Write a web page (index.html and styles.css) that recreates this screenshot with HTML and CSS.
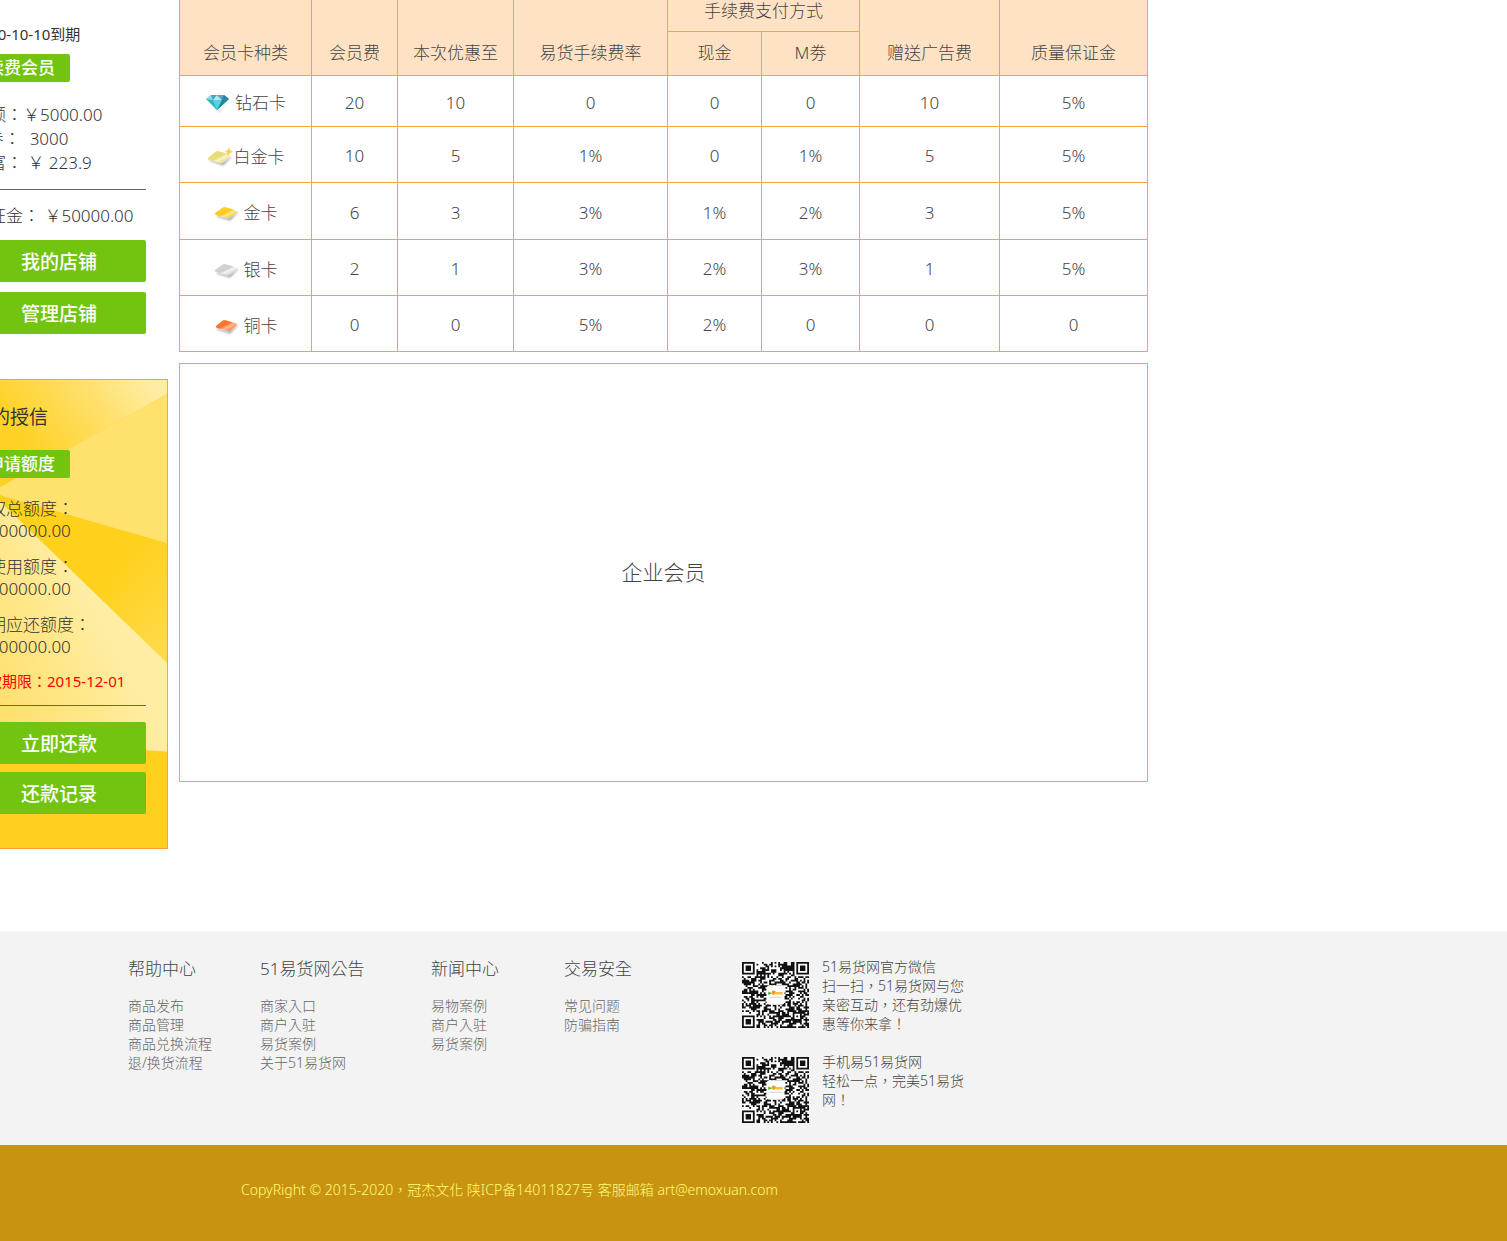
FILE: index.html
```html
<!DOCTYPE html>
<html lang="zh-TW">
<head>
<meta charset="utf-8">
<title>51易货网</title>
<link rel="stylesheet" href="styles.css">
</head>
<body>
<svg class="defs" aria-hidden="true">
  <defs>
    <linearGradient id="gold" x1="0" y1="0" x2="1" y2="1"><stop offset="0" stop-color="#ffdc2e"/><stop offset=".5" stop-color="#fbc91c"/><stop offset=".62" stop-color="#ffe98a"/><stop offset="1" stop-color="#f0b400"/></linearGradient>
    <linearGradient id="platinum" x1="0" y1="0" x2="1" y2="1"><stop offset="0" stop-color="#e6dc78"/><stop offset=".5" stop-color="#e8dd7c"/><stop offset=".62" stop-color="#f9f5c8"/><stop offset="1" stop-color="#d8c95c"/></linearGradient>
    <linearGradient id="silver" x1="0" y1="0" x2="1" y2="1"><stop offset="0" stop-color="#d4d4d4"/><stop offset=".5" stop-color="#cfcfcf"/><stop offset=".62" stop-color="#f4f4f4"/><stop offset="1" stop-color="#b9b9b9"/></linearGradient>
    <linearGradient id="copper" x1="0" y1="0" x2="1" y2="1"><stop offset="0" stop-color="#ff7a2c"/><stop offset=".45" stop-color="#fb7430"/><stop offset=".6" stop-color="#ffb98c"/><stop offset="1" stop-color="#f0641c"/></linearGradient>
    <filter id="soft" x="-20%" y="-40%" width="140%" height="200%"><feGaussianBlur stdDeviation=".8"/></filter>
  </defs>
</svg>

<div class="page">
  <div class="layout">
    <aside class="sidebar">
      <section class="account">
        <p class="note">2020-10-10到期</p>
        <button class="btn btn-small" type="button">续费会员</button>
        <div class="lines">
          <p>余额：￥5000.00</p>
          <p>M劵：&nbsp; 3000</p>
          <p>财富：&nbsp;￥ 223.9</p>
        </div>
        <hr>
        <p class="deposit">保证金：&nbsp;￥50000.00</p>
        <div class="actions">
          <button class="btn" type="button">我的店铺</button>
          <button class="btn" type="button">管理店铺</button>
        </div>
      </section>

      <section class="credit">
        <svg class="rays" viewBox="0 0 218 470" preserveAspectRatio="none" aria-hidden="true">
          <defs>
            <linearGradient id="r1" gradientUnits="userSpaceOnUse" x1="90" y1="85" x2="200" y2="0"><stop offset="0" stop-color="#ffd125"/><stop offset=".6" stop-color="#ffe06c"/><stop offset="1" stop-color="#ffeda6"/></linearGradient>
            <linearGradient id="r2" gradientUnits="userSpaceOnUse" x1="60" y1="120" x2="218" y2="260"><stop offset="0" stop-color="#ffd01c"/><stop offset=".6" stop-color="#ffd01c"/><stop offset="1" stop-color="#ffda48"/></linearGradient>
            <linearGradient id="r3" gradientUnits="userSpaceOnUse" x1="30" y1="330" x2="160" y2="260"><stop offset="0" stop-color="#ffde68"/><stop offset=".7" stop-color="#ffe88e"/><stop offset="1" stop-color="#ffeda4"/></linearGradient>
          </defs>
          <rect width="218" height="470" fill="#ffd01e"/>
          <path d="M0 0H218V14L40 113L0 100Z" fill="url(#r1)"/>
          <path d="M40 113L218 14V164Z" fill="#ffe26e"/>
          <path d="M40 113L218 164V284Z" fill="url(#r2)"/>
          <path d="M40 113L218 284V373L0 360V113Z" fill="url(#r3)"/>
        </svg>
        <h2>我的授信</h2>
        <button class="btn btn-small" type="button">申请额度</button>
        <dl>
          <div><dt>授权总额度：</dt><dd>￥100000.00</dd></div>
          <div><dt>已使用额度：</dt><dd>￥100000.00</dd></div>
          <div><dt>本期应还额度：</dt><dd>￥100000.00</dd></div>
        </dl>
        <p class="note due">还款期限：2015-12-01</p>
        <hr>
        <div class="actions">
          <button class="btn" type="button">立即还款</button>
          <button class="btn" type="button">还款记录</button>
        </div>
      </section>
    </aside>

    <main class="main">
      <table class="fees">
        <colgroup><col class="c-name"><col class="c-fee"><col class="c-offer"><col class="c-rate"><col class="c-cash"><col class="c-m"><col class="c-ad"><col></colgroup>
        <thead>
          <tr>
            <th rowspan="2">会员卡种类</th><th rowspan="2">会员费</th><th rowspan="2">本次优惠至</th><th rowspan="2">易货手续费率</th>
            <th class="group" colspan="2">手续费支付方式</th>
            <th rowspan="2">赠送广告费</th><th rowspan="2">质量保证金</th>
          </tr>
          <tr><th>现金</th><th>M劵</th></tr>
        </thead>
        <tbody>
          <tr class="first">
            <th><span class="card-name"><svg width="25" height="20" viewBox="0 0 25 20"><path d="M2 6L14 18L24 7L14 19Z" fill="#555" opacity=".6" filter="url(#soft)"/><path d="M1 6L6 2H19L24 6L12 17Z" fill="#35b3c6"/><path d="M1 6L6 2L8 7Z" fill="#8fdbe4"/><path d="M6 2H12L8 7Z" fill="#4aa5bb"/><path d="M12 2L17 7H8Z" fill="#b5e6ee"/><path d="M12 2H19L17 7Z" fill="#5aa3bd"/><path d="M19 2L24 6L17 7Z" fill="#2c7f96"/><path d="M8 7H17L12 17Z" fill="#4fd6dc"/><path d="M17 7L24 6L12 17Z" fill="#1f8a96"/></svg>钻石卡</span></th>
            <td>20</td><td>10</td><td>0</td><td>0</td><td>0</td><td>10</td><td>5%</td>
          </tr>
          <tr>
            <th><span class="card-name tight"><svg width="27" height="20" viewBox="0 0 27 20"><path d="M3 13L15 17L24 10L16 18Z" stroke="#555" stroke-width="1" opacity=".6" filter="url(#soft)"/><path d="M1 11L8 5Q9 4 11 4L21 7Q24 8 22 10L17 15Q16 16 14 16L2 13Q0 12 1 11Z" fill="url(#platinum)"/><path d="M22 0L23 3L26 5L23 6L21 9L20 6L18 4L21 3Z" fill="#ffd04a"/></svg>白金卡</span></th>
            <td>10</td><td>5</td><td>1%</td><td>0</td><td>1%</td><td>5</td><td>5%</td>
          </tr>
          <tr class="tall">
            <th><span class="card-name"><svg width="25" height="20" viewBox="0 0 25 20"><path d="M3 13L15 16L24 9L16 17Z" stroke="#555" stroke-width="1" opacity=".6" filter="url(#soft)"/><path d="M1 10L8 5Q9 4 11 4L21 7Q24 8 22 10L17 14Q16 15 14 15L2 12Q0 11 1 10Z" fill="url(#gold)"/></svg>金卡</span></th>
            <td>6</td><td>3</td><td>3%</td><td>1%</td><td>2%</td><td>3</td><td>5%</td>
          </tr>
          <tr>
            <th><span class="card-name"><svg width="25" height="20" viewBox="0 0 25 20"><path d="M3 13L15 16L24 9L16 17Z" stroke="#555" stroke-width="1" opacity=".6" filter="url(#soft)"/><path d="M1 10L8 5Q9 4 11 4L21 7Q24 8 22 10L17 14Q16 15 14 15L2 12Q0 11 1 10Z" fill="url(#silver)"/></svg>银卡</span></th>
            <td>2</td><td>1</td><td>3%</td><td>2%</td><td>3%</td><td>1</td><td>5%</td>
          </tr>
          <tr>
            <th><span class="card-name"><svg width="25" height="20" viewBox="0 0 25 20"><path d="M3 13L15 16L24 9L16 17Z" stroke="#555" stroke-width="1" opacity=".6" filter="url(#soft)"/><path d="M2 10L8 5Q9 4 11 4L21 7Q24 8 22 10L17 14Q16 15 14 15L3 12Q1 11 2 10Z" fill="url(#copper)"/></svg>铜卡</span></th>
            <td>0</td><td>0</td><td>5%</td><td>2%</td><td>0</td><td>0</td><td>0</td>
          </tr>
        </tbody>
      </table>
      <section class="company">企业会员</section>
    </main>
  </div>

  <footer>
    <div class="links">
      <nav><h3>帮助中心</h3><ul><li><a href="#">商品发布</a></li><li><a href="#">商品管理</a></li><li><a href="#">商品兑换流程</a></li><li><a href="#">退/换货流程</a></li></ul></nav>
      <nav><h3>51易货网公告</h3><ul><li><a href="#">商家入口</a></li><li><a href="#">商户入驻</a></li><li><a href="#">易货案例</a></li><li><a href="#">关于51易货网</a></li></ul></nav>
      <nav><h3>新闻中心</h3><ul><li><a href="#">易物案例</a></li><li><a href="#">商户入驻</a></li><li><a href="#">易货案例</a></li></ul></nav>
      <nav><h3>交易安全</h3><ul><li><a href="#">常见问题</a></li><li><a href="#">防骗指南</a></li></ul></nav>
      <div class="codes">
        <div class="code"><svg class="qr" viewBox="0 0 37 37" preserveAspectRatio="none"></svg><p>51易货网官方微信<br>扫一扫，51易货网与您<br>亲密互动，还有劲爆优<br>惠等你来拿！</p></div>
        <div class="code"><svg class="qr" viewBox="0 0 37 37" preserveAspectRatio="none"></svg><p>手机易51易货网<br>轻松一点，完美51易货<br>网！</p></div>
      </div>
    </div>
    <div class="copyright"><p>CopyRight © 2015-2020，冠杰文化 陕ICP备14011827号 客服邮箱 art@emoxuan.com</p></div>
  </footer>
</div>
<script src="qr.js"></script>
</body>
</html>
```
FILE: qr.js
```js
// Fills every .qr element with a 37-module code and the logo plate in its centre.
(function () {
  var N = 37;
  function ring(x, y, cx, cy) { return Math.max(Math.abs(x - cx), Math.abs(y - cy)); }
  function build() {
    var seed = 5151, d = '';
    for (var y = 0; y < N; y++) {
      for (var x = 0; x < N; x++) {
        seed = (seed * 1103515245 + 12345) % 2147483648;
        var on = (seed / 2147483648) < 0.55;
        [[3, 3], [N - 4, 3], [3, N - 4]].forEach(function (c) {
          var r = ring(x, y, c[0], c[1]);
          if (r <= 4) on = r === 3 || r <= 1;
        });
        var a = ring(x, y, N - 7, N - 7);
        if (a <= 2) on = a !== 1;
        if (on) d += 'M' + x + ' ' + y + 'h1v1h-1z';
      }
    }
    return '<rect width="37" height="37" fill="#fff"/><path d="' + d + '" fill="#111"/>' +
      '<rect x="13.500" y="13" width="10" height="11" rx="2" fill="#fff"/>' +
      '<path d="M14.500 16.500l2 1-2 1z" fill="#5a3"/><circle cx="17.500" cy="17.200" r="1.200" fill="#f90"/>' +
      '<path d="M18.500 16.800h4v1.400h-4z" fill="#fb4"/><path d="M15 19.500h7v.5h-7z" fill="#ccc"/>';
  }
  document.querySelectorAll('.qr').forEach(function (el) { el.innerHTML = build(); });
})();
```
FILE: styles.css
```css
* { box-sizing: border-box; }
body {
  margin: 0;
  font: 300 17px/24px "Noto Sans", "Noto Sans CJK TC", sans-serif;
  color: #444;
  background: #fff;
}
p, h2, h3, ul, dl, dd { margin: 0; padding: 0; }
ul { list-style: none; }
.defs { position: absolute; width: 0; height: 0; }
.page { overflow: hidden; }

/* The account column starts beyond the left edge of the window. */
.layout {
  display: flex;
  align-items: flex-start;
  gap: 11px;
  margin-left: -50px;
  padding-bottom: 82px;
}
.sidebar { flex: 0 0 218px; color: #333; }
.account { padding: 22px 22px 45px; }
.note { font-size: 15px; font-weight: 400; }
.btn {
  display: block;
  width: 100%;
  height: 42px;
  padding: 2px 0 0;
  border: 0;
  border-radius: 2px;
  background: #72c411;
  color: #fff;
  font: 500 19px/40px "Noto Sans", "Noto Sans CJK TC", sans-serif;
}
.btn-small { width: 98px; height: 28px; padding: 0; font-size: 17px; line-height: 28px; }
.account .btn-small { margin: 8px 0 21px; }
hr { height: 1px; margin: 14px 0; border: 0; background: #666; }
.actions { display: grid; gap: 10px; }
.deposit { margin-bottom: 12px; }

.credit {
  position: relative;
  padding: 25px 21px 34px;
  border: 1px solid #f8a33c;
}
.credit > * { position: relative; }
.credit .rays { position: absolute; inset: 0; width: 100%; height: 100%; }
h2 { margin-bottom: 21px; font-size: 19px; font-weight: 400; line-height: 24px; color: #333; }
.credit dl { display: grid; gap: 14px; margin: 20px 0 11px; line-height: 22px; }
.credit hr { margin: 12px 0 16px; }
.credit .actions { gap: 8px; }
.due { color: #f00; }

.main { flex: 0 1 969px; min-width: 0; }
.fees { width: 100%; border-collapse: collapse; table-layout: fixed; text-align: center; }
.c-name { width: 132px; }
.c-fee { width: 86px; }
.c-offer { width: 116px; }
.c-rate { width: 154px; }
.c-cash { width: 94px; }
.c-m { width: 98px; }
.c-ad { width: 140px; }
.fees th, .fees td { height: 56px; padding: 4px 0 0; border: 1px solid #f8a33c; font-weight: 300; }
.fees thead th { height: 44px; padding: 0 0 10px; background: #ffe2c4; vertical-align: bottom; }
.fees thead tr:first-child th { border-top: 0; }
.fees thead .group { height: 31px; line-height: 20px; }
.fees .first th, .fees .first td { height: 51px; }
.fees .tall td { height: 57px; }
.card-name { display: inline-flex; align-items: center; gap: 5px; vertical-align: middle; }
.card-name.tight { gap: 0; }
.company {
  display: flex;
  align-items: center;
  justify-content: center;
  height: 419px;
  margin-top: 11px;
  border: 1px solid #f8a33c;
  font-size: 21px;
}

.links {
  display: grid;
  grid-template-columns: 132px 171px 133px 178px 219px;
  min-height: 214px;
  padding: 26px 0 17px 128px;
  background: #f3f3f3;
  font-size: 14px;
  line-height: 19px;
}
h3 { margin-bottom: 15px; font-size: 17px; font-weight: 300; line-height: 24px; }
.links a { color: #666; text-decoration: none; }
.codes { display: grid; gap: 19px; align-content: start; }
.code { display: flex; gap: 13px; min-height: 76px; white-space: nowrap; }
.qr { flex: none; width: 67px; height: 66px; margin-top: 5px; }
.copyright { padding: 33px 0 39px 241px; background: #c99312; color: #ffff78; font-size: 14px; }
```
